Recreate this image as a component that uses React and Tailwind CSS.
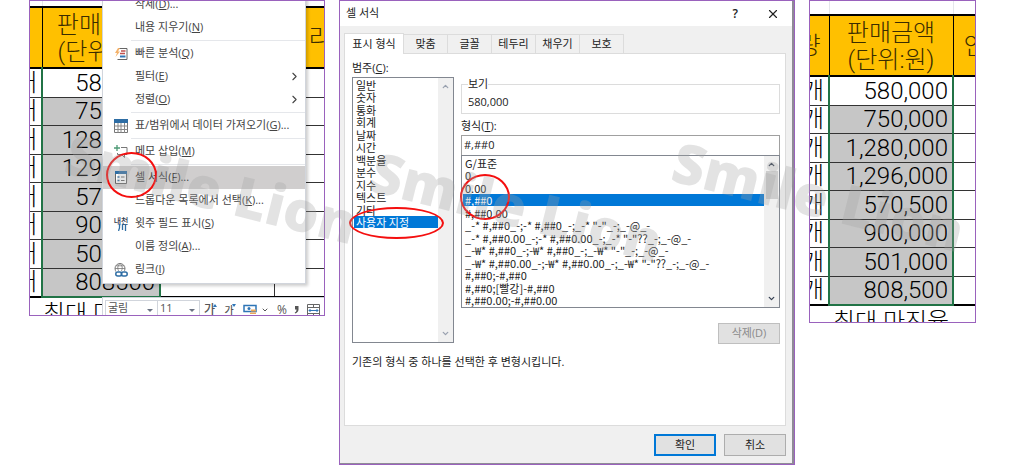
import { ChevronRight, ChevronDown, ChevronUp, X } from 'lucide-react';

const UI_FONT = "font-['Open_Sans','Noto_Sans_CJK_KR',sans-serif]";
const SHEET_FONT = "font-['Roboto','Noto_Sans_CJK_KR',sans-serif]";

function Watermark({ className }) {
  return (
    <div
      aria-hidden="true"
      className={`pointer-events-none absolute z-20 origin-top-left rotate-14 font-['Open_Sans',sans-serif] text-[56px] leading-none font-extrabold whitespace-nowrap text-neutral-400/30 select-none ${className}`}
    >
      Smile Lion
    </div>
  );
}

function Sheet({ top, columns, heads, unit, values, totalLabel }) {
  return (
    <table className={`w-full table-fixed border-collapse text-2xl leading-7 font-light text-black ${SHEET_FONT}`}>
      <colgroup>
        {columns.map((c, i) => (
          <col key={i} className={c} />
        ))}
      </colgroup>
      <thead>
        <tr className={top}>
          {columns.map((c, i) => (
            <td key={i} className="border-r border-gray-200 p-0 last:border-r-0" />
          ))}
        </tr>
        <tr className="h-[61px] border-y-2 border-black bg-[#ffc000] text-[#3a2c00]">
          {heads.map((h, i) => (
            <th key={i} scope="col" className="border-r border-black p-0 font-light last:border-r-0">
              <div className={`flex overflow-hidden pt-0.5 leading-[27px] whitespace-pre ${h.className}`}>{h.text}</div>
            </th>
          ))}
        </tr>
      </thead>
      <tbody>
        {values.map((v, i) => (
          <tr key={v} className="border-b border-[#333] last:border-b-2 last:border-black odd:h-[29px] even:h-7">
            <td className="p-0">
              <div className="flex h-[27px] items-center justify-end overflow-hidden pr-1">{unit}</div>
            </td>
            <td className={`border-x-2 border-[#217346] p-0 ${i === 0 ? 'bg-white' : 'bg-[#c6c6c6]'}`}>
              <div className="flex h-[27px] items-center justify-end pr-1">{v}</div>
            </td>
            {columns.slice(2).map((c, k) => (
              <td key={k} className="border-r border-[#333] p-0 last:border-r-0" />
            ))}
          </tr>
        ))}
      </tbody>
      <tfoot>
        <tr>
          <td className="p-0" />
          <td className="border-t-2 border-[#217346] p-0 pt-0.5 text-center whitespace-nowrap">{totalLabel}</td>
        </tr>
      </tfoot>
    </table>
  );
}

const QuickIcon = () => (
  <svg width="14" height="14" viewBox="0 0 14 14" fill="none">
    <path d="M5 1.500h8v11H3.500" stroke="#666" />
    <path d="M7 4h4.500M6 6.500h5" stroke="#c0504d" strokeWidth="1.500" />
    <path d="M6 9.500h5.500" stroke="#2e75b6" strokeWidth="2" />
    <path d="M4 1L1 6h2L1.500 10 6 4.500H4L6 1z" fill="#f4b26a" />
  </svg>
);
const TableIcon = () => (
  <svg width="14" height="14" viewBox="0 0 14 14" fill="none">
    <path d="M.5.5h13v13H.5z" fill="#fff" stroke="#777" />
    <path d="M0 0h14v4H0z" fill="#2e6da4" />
    <path d="M.5 7h13M.5 10.500h13M4 4v10M7 4v10M10.500 4v10" stroke="#888" />
  </svg>
);
const NoteIcon = () => (
  <svg width="14" height="14" viewBox="0 0 14 14" fill="none">
    <path d="M7 2.500h6v7H10.500v3L7.500 9.500H3.500V8" stroke="#777" />
    <path d="M3 0v6M0 3h6" stroke="#4d9a76" strokeWidth="1.300" />
  </svg>
);
const CellIcon = () => (
  <svg width="12" height="13" viewBox="0 0 12 13" fill="none">
    <path d="M.5.5h11v12H.5z" fill="#fff" stroke="#666" />
    <path d="M0 0h12v3H0z" fill="#2e6da4" />
    <path d="M2.500 6h2M2.500 9.500h2" stroke="#2e6da4" strokeWidth="1.500" />
    <path d="M6 6h3.500M6 9.500h3.500" stroke="#666" />
  </svg>
);
const RubyIcon = () => (
  <span className="flex flex-col items-center text-[8px] leading-[7px] font-medium text-gray-700">
    내천
    <svg width="9" height="7" viewBox="0 0 9 7" fill="none" className="ml-1">
      <path d="M1.500 0v4L.5 7M4.500 0v6M7.500 0v7" stroke="#2e6da4" strokeWidth="1.300" />
    </svg>
  </span>
);
const LinkIcon = () => (
  <svg width="14" height="14" viewBox="0 0 14 14" fill="none">
    <circle cx="6" cy="5.500" r="5" stroke="#777" />
    <path d="M1 5.500h10M2 2.800h8M6 .5c-3 3-3 6 0 9M6 .5c3 3 3 6 0 9" stroke="#777" strokeWidth=".8" />
    <path d="M2 8h12v6H2z" fill="#fff" />
    <rect x="1.800" y="9" width="6" height="4" rx="2" stroke="#2e6da4" strokeWidth="1.500" />
    <rect x="7.200" y="9" width="6" height="4" rx="2" stroke="#2e6da4" strokeWidth="1.500" />
  </svg>
);

const MENU = [
  { label: '삭제', k: 'D', more: true },
  { label: '내용 지우기', k: 'N' },
  null,
  { label: '빠른 분석', k: 'Q', icon: <QuickIcon /> },
  { label: '필터', k: 'E', sub: true },
  { label: '정렬', k: 'O', sub: true },
  null,
  { label: '표/범위에서 데이터 가져오기', k: 'G', more: true, icon: <TableIcon /> },
  null,
  { label: '메모 삽입', k: 'M', icon: <NoteIcon /> },
  null,
  { label: '셀 서식', k: 'F', more: true, icon: <CellIcon />, active: true },
  { label: '드롭다운 목록에서 선택', k: 'K', more: true },
  { label: '윗주 필드 표시', k: 'S', icon: <RubyIcon /> },
  { label: '이름 정의', k: 'A', more: true },
  { label: '링크', k: 'I', icon: <LinkIcon /> },
];

function ContextMenu() {
  return (
    <div
      role="menu"
      className="absolute -top-[9px] right-[18px] left-[72px] border border-gray-300 bg-white pb-0.5 text-[11px] text-[#444] shadow-[2px_2px_3px_rgba(0,0,0,0.2)]"
    >
      {MENU.map((m, i) =>
        m ? (
          <button
            key={i}
            type="button"
            role="menuitem"
            className={`flex h-[23px] w-full items-center pr-1 text-left whitespace-nowrap ${m.active ? 'bg-[#d0cece]' : ''}`}
          >
            <span className="flex w-8 shrink-0 justify-center pl-1">{m.icon}</span>
            <span className="flex-1">
              {m.label}(<u>{m.k}</u>){m.more && '...'}
            </span>
            {m.sub && <ChevronRight size={13} strokeWidth={2} />}
          </button>
        ) : (
          <div key={i} role="separator" className="my-px ml-7 h-px bg-gray-200" />
        ),
      )}
    </div>
  );
}

function MiniToolbar() {
  return (
    <div className="absolute top-[296px] right-0 left-[72px] flex h-[30px] items-start border-t border-l border-gray-300 bg-white pt-0.5 pl-0.5 text-[11px] text-[#555]">
      <div className="flex h-5 w-[53px] items-center border border-gray-300">
        <select aria-label="글꼴" className="w-full appearance-none bg-transparent pb-1 pl-0.5">
          <option>굴림</option>
        </select>
        <span className="mr-1 border-x-[3px] border-t-[3px] border-x-transparent border-t-gray-500" />
      </div>
      <div className="flex h-5 w-[42px] items-center border border-l-0 border-gray-300">
        <select aria-label="글꼴 크기" className="w-full appearance-none bg-transparent pb-1 pl-0.5">
          <option>11</option>
        </select>
        <span className="mr-1 border-x-[3px] border-t-[3px] border-x-transparent border-t-gray-500" />
      </div>
      <div className="flex flex-1 items-center justify-between pr-1 pl-1">
        <button type="button" aria-label="글꼴 크기 크게" className="flex h-5 items-start text-xs leading-5 font-medium">
          가<span className="mt-1 -ml-0.5 border-x-2 border-b-[3px] border-x-transparent border-b-[#2e75b6]" />
        </button>
        <button type="button" aria-label="글꼴 크기 작게" className="flex h-5 items-start text-[10px] leading-5 font-medium">
          가<span className="mt-1 -ml-0.5 border-x-2 border-t-[3px] border-x-transparent border-t-[#2e75b6]" />
        </button>
        <button type="button" aria-label="회계 표시 형식" className="flex h-5 items-center gap-1">
          <svg width="14" height="13" viewBox="0 0 14 13" fill="none">
            <path d="M1 1.500h12v6H1z" fill="#fff" stroke="#2e75b6" strokeWidth="1.500" />
            <circle cx="6" cy="4.500" r="1.500" fill="#2e75b6" />
            <path d="M8 5.500h5v2H8zM7 8.500h6v1.500H7zM4 11h9v2H4z" fill="#eba85a" />
          </svg>
          <ChevronDown size={8} strokeWidth={3} />
        </button>
        <button type="button" className="h-5 text-xs leading-5">%</button>
        <button type="button" aria-label="쉼표 스타일" className="flex h-5 items-center">
          <svg width="5" height="8" viewBox="0 0 5 8">
            <path d="M1 0h3.500v3.500C4.500 5.500 3 7 1 7.500L.8 6.500C2 6 2.500 5 2.500 3.500H1z" fill="#555" />
          </svg>
        </button>
        <button type="button" aria-label="병합하고 가운데 맞춤" className="flex h-5 items-center">
          <svg width="13" height="13" viewBox="0 0 13 13" fill="none">
            <path d="M.5.5h12v12H.5zM.5 3.500h12M.5 9.500h12M6.500.5v3M6.500 9.500v3" stroke="#666" />
            <path d="M2 6.500h9M3.500 5L2 6.500 3.500 8M9.500 5L11 6.500 9.500 8" stroke="#2e75b6" />
          </svg>
        </button>
      </div>
    </div>
  );
}

const RAW = ['580000', '750000', '1280000', '1296000', '570500', '900000', '501000', '808500'];
const FORMATTED = ['580,000', '750,000', '1,280,000', '1,296,000', '570,500', '900,000', '501,000', '808,500'];
const TABS = ['표시 형식', '맞춤', '글꼴', '테두리', '채우기', '보호'];
const CATEGORIES = ['일반', '숫자', '통화', '회계', '날짜', '시간', '백분율', '분수', '지수', '텍스트', '기타', '사용자 지정'];
const FORMATS = [
  'G/표준',
  '0',
  '0.00',
  '#,##0',
  '#,##0.00',
  '_-* #,##0_-;-* #,##0_-;_-* "-"_-;_-@_-',
  '_-* #,##0.00_-;-* #,##0.00_-;_-* "-"??_-;_-@_-',
  '_-₩* #,##0_-;-₩* #,##0_-;_-₩* "-"_-;_-@_-',
  '_-₩* #,##0.00_-;-₩* #,##0.00_-;_-₩* "-"??_-;_-@_-',
  '#,##0;-#,##0',
  '#,##0;[빨강]-#,##0',
  '#,##0.00;-#,##0.00',
];

function ListBox({ id, label, items, value, className, faded }) {
  return (
    <div className={`flex border border-[#828790] bg-white ${className}`}>
      <select
        id={id}
        aria-label={label}
        size={12}
        defaultValue={value}
        className="h-full min-w-0 flex-1 appearance-none overflow-hidden pl-px font-['Noto_Sans_CJK_KR',sans-serif] text-[11px] outline-none"
      >
        {items.map((t) => (
          <option
            key={t}
            value={t}
            className="flex min-h-0 items-center overflow-visible px-0.5 py-0 leading-3! whitespace-pre checked:bg-linear-to-r checked:from-[#0078d7] checked:to-[#0078d7] checked:text-white! odd:h-[13px] even:h-3"
          >
            {t}
          </option>
        ))}
      </select>
      <div className={`flex w-[15px] flex-col items-center justify-between bg-[#f0f0f0] py-1 ${faded ? 'text-gray-400' : 'text-gray-700'}`}>
        <ChevronUp size={9} strokeWidth={3.500} />
        {!faded && <span className="mt-0.5 mb-auto h-7 w-3 bg-[#cdcdcd]" />}
        <ChevronDown size={9} strokeWidth={3.500} />
      </div>
    </div>
  );
}

function FormatDialog() {
  return (
    <section
      role="dialog"
      aria-label="셀 서식"
      className={`relative border border-[#9a62bd] text-[11px] text-[#222] ${UI_FONT}`}
    >
      <div className="border-r-2 border-b border-[#8f8b96] bg-[#f0f0f0]">
        <header className="flex h-[25px] items-center bg-white pr-3 pl-1.5">
          <h1 className="flex-1">셀 서식</h1>
          <button type="button" aria-label="도움말" className="mr-7 text-xs font-semibold">?</button>
          <button type="button" aria-label="닫기">
            <X size={14} strokeWidth={2} />
          </button>
        </header>
        <div className="px-1 pr-1.5 pt-[7px] pb-[7px]">
          <div role="tablist" className="flex h-5 items-end">
            {TABS.map((t, i) => (
              <button
                key={t}
                type="button"
                role="tab"
                aria-selected={i === 0}
                className={
                  i === 0
                    ? 'z-10 -mb-px h-[21px] w-[60px] border border-b-0 border-[#dcdcdc] bg-white'
                    : 'h-[19px] w-11 border border-b-0 border-l-0 border-[#dcdcdc] bg-[#f0f0f0]'
                }
              >
                {t}
              </button>
            ))}
          </div>
          <div className="border border-[#dcdcdc] bg-white pt-1.5 pr-[5px] pb-[55px] pl-[7px]">
            <div className="flex items-start gap-[7px]">
              <div className="w-[102px] shrink-0">
                <label htmlFor="category" className="block h-[17px] leading-4">
                  범주(<u>C</u>):
                </label>
                <ListBox id="category" items={CATEGORIES} value="사용자 지정" className="h-[266px]" faded />
              </div>
              <div className="flex min-w-0 flex-1 flex-col pt-4">
                <fieldset className="h-[38px] border border-[#dcdcdc] px-1.5">
                  <legend className="h-4 leading-4">보기</legend>
                  <output className="block pt-0.5 leading-4">580,000</output>
                </fieldset>
                <label htmlFor="format" className="mt-1 block h-[17px] leading-4">
                  형식(<u>T</u>):
                </label>
                <input
                  id="format"
                  defaultValue="#,##0"
                  className="h-5 w-full border border-b-0 border-[#a0a0a0] bg-white px-0.5 pb-0.5 outline-none"
                />
                <ListBox id="formats" label="형식 목록" items={FORMATS} value="#,##0" className="h-[153px]" />
                <button
                  type="button"
                  disabled
                  className="mt-[15px] h-[21px] w-[62px] self-end border border-[#bfbfbf] bg-[#e1e1e1] text-[#8a8a8a]"
                >
                  삭제(D)
                </button>
              </div>
            </div>
            <p className="mt-2.5 leading-4">기존의 형식 중 하나를 선택한 후 변형시킵니다.</p>
          </div>
          <div className="mt-2 flex justify-end gap-2">
            <button type="button" className="h-[22px] w-[62px] border-2 border-[#0078d7] bg-[#e1e1e1]">
              확인
            </button>
            <button type="button" className="h-[22px] w-[62px] border border-[#adadad] bg-[#e1e1e1]">
              취소
            </button>
          </div>
        </div>
      </div>
      <span className="absolute top-[206px] left-[9px] h-8 w-[95px] rounded-[50%] border-2 border-[#f40f0f]" />
      <span className="absolute top-[173px] left-[120px] h-[46px] w-[50px] rounded-[50%] border-2 border-[#f40f0f]" />
    </section>
  );
}

export default function App() {
  return (
    <main className="relative overflow-hidden bg-white">
      <div className="grid grid-cols-[296fr_456fr_167fr] items-start gap-3.5 pr-12 pl-[29px]">
        <section className={`relative h-[316px] overflow-hidden border border-[#9a62bd] ${UI_FONT}`}>
          <Sheet
            top="h-1.5"
            columns={['w-3', 'w-[118px]', 'w-[114px]', '']}
            heads={[
              { text: '', className: '' },
              { text: '판매금액\n(단위:원)', className: 'justify-center' },
              { text: '', className: '' },
              { text: '리', className: 'pl-[34px]' },
            ]}
            unit="개"
            values={RAW}
            totalLabel="최대 마진율"
          />
          <ContextMenu />
          <MiniToolbar />
          <span className="absolute top-[151px] left-[76px] h-[46px] w-[51px] rounded-[50%] border-2 border-[#f40f0f]" />
        </section>
        <FormatDialog />
        <section className="relative h-[323px] overflow-hidden border border-[#9a62bd]">
          <Sheet
            top="h-3.5"
            columns={['w-[19px]', 'w-[124px]', '']}
            heads={[
              { text: '량', className: 'justify-end pr-2' },
              { text: '판매금액\n(단위:원)', className: 'justify-center' },
              { text: '인', className: 'pl-2.5' },
            ]}
            unit="개"
            values={FORMATTED}
            totalLabel="최대 마진율"
          />
        </section>
      </div>
      <Watermark className="top-[124px] left-[74px]" />
      <Watermark className="top-[142px] left-[379px]" />
      <Watermark className="top-[132px] left-[681px]" />
    </main>
  );
}
